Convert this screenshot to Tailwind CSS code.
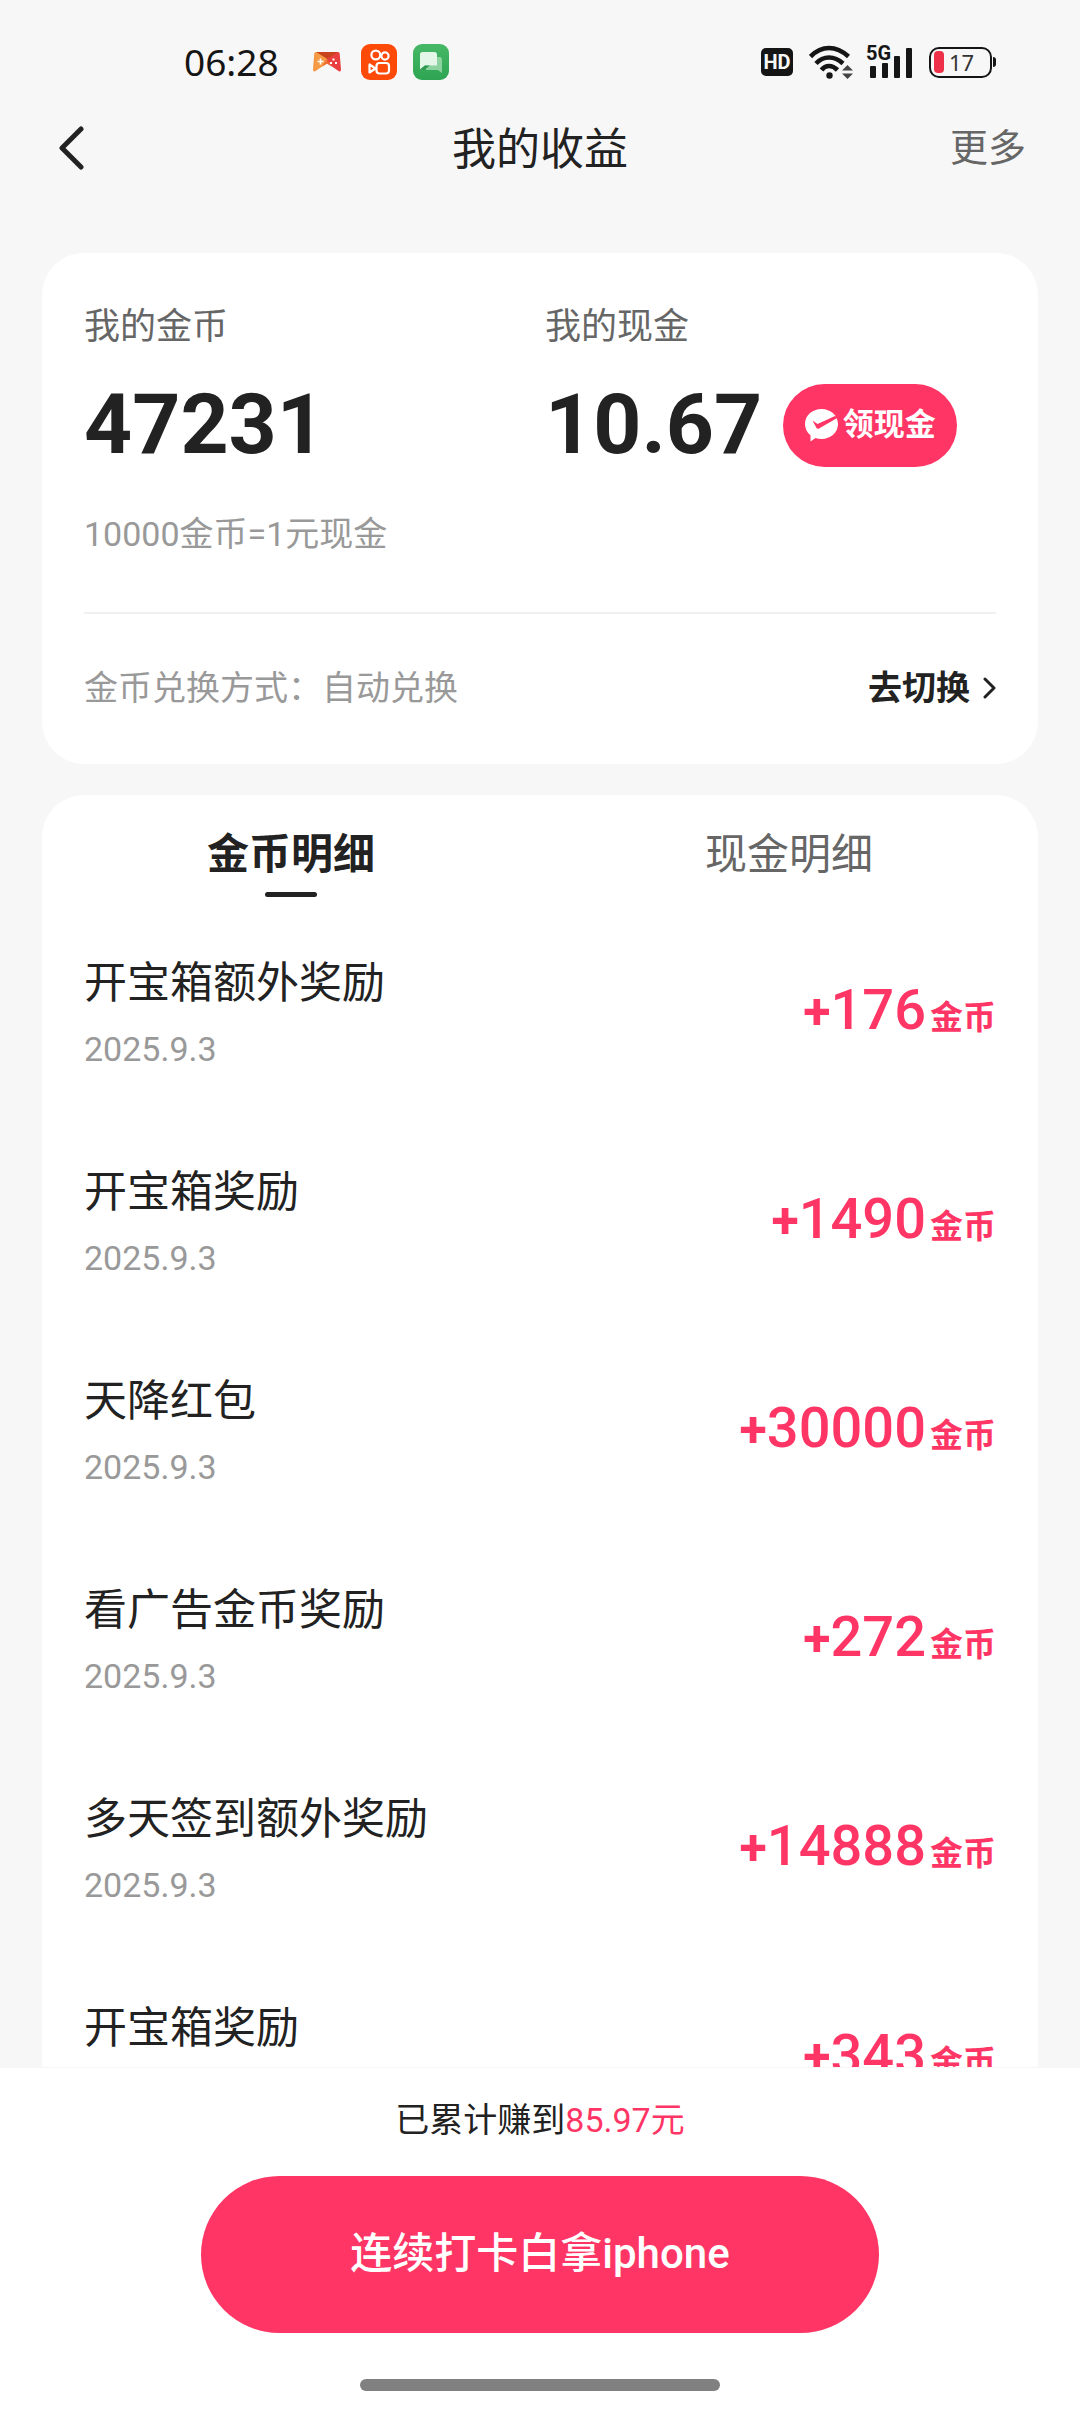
<!DOCTYPE html>
<html lang="zh-CN">
<head>
<meta charset="utf-8">
<meta name="viewport" content="width=device-width, initial-scale=1">
<title>我的收益</title>
<script src="https://cdn.jsdelivr.net/npm/@tailwindcss/browser@4"></script>
</head>
<body class="bg-[#f7f7f7] text-[#222222] font-[Roboto,'Noto_Sans_CJK_SC',sans-serif]">
<div class="flex h-screen flex-col">

  <!-- Status bar -->
  <div class="flex h-24 shrink-0 items-center justify-between pt-7 pr-[84px] pl-[184px] text-[#151515]">
    <div class="flex items-center">
      <span class="font-['Noto_Sans',sans-serif] text-[37px] leading-[48px]">06:28</span>
      <svg class="ml-[34px] h-5 w-7" viewBox="0 0 28 20" aria-hidden="true">
        <path d="M3 0Q1.600 0 1.300 1.600L0 17.500Q0 20 2.200 19.300L9 14.500Q14 11.500 14 11.500V0Z" fill="#f4943f"/>
        <path d="M25 0Q26.400 0 26.700 1.600L28 17.500Q28 20 25.800 19.300L19 14.500Q14 11.500 14 11.500V0Z" fill="#e9403f"/>
        <path d="M3 0h22L14 7Z" fill="#c8431c"/>
        <path d="M3 0 14 7v4.500L9 14.500 1 19Z" fill="#f59a45"/>
        <path d="M14 7 9 14.500 14 11.500 19 14.500Z" fill="#ef6a35"/>
        <path d="M7.500 6.500v6M4.500 9.500h6" stroke="#fff" stroke-width="1.600"/>
        <path d="M20.500 6.500v2M18 10v2M23 10v2" stroke="#fff" stroke-width="2"/>
      </svg>
      <svg class="ml-5 size-9" viewBox="0 0 36 36" aria-hidden="true">
        <rect width="36" height="36" rx="9" fill="#fe4a08"/>
        <g fill="none" stroke="#fff" stroke-width="2.200">
          <circle cx="14.800" cy="11" r="4.400"/><circle cx="24" cy="12" r="3.600"/>
          <rect x="15.500" y="19" width="12.500" height="10.500" rx="3"/>
          <path d="M8.500 20.500v8l6-4z" stroke-linejoin="round"/>
        </g>
      </svg>
      <svg class="ml-4 size-9" viewBox="0 0 36 36" aria-hidden="true">
        <defs><linearGradient id="chat" x1="0" y1="0" x2="0" y2="1"><stop stop-color="#47b866"/><stop offset="1" stop-color="#2da552"/></linearGradient></defs>
        <rect width="36" height="36" rx="9" fill="url(#chat)"/>
        <path d="M13 13h13.500q2.500 0 2.500 2.500V29l-4-3H13Z" fill="#8dd3a0"/>
        <path d="M9.500 8h12q2.500 0 2.500 2.500v11H12l-5 4V10.500Q7 8 9.500 8Z" fill="#e3f6e7"/>
        <path d="M7 25.500l5-4h5L11 26Z" fill="#2f9b50"/>
      </svg>
    </div>
    <div class="flex items-center">
      <span class="flex h-7 w-8 items-center justify-center rounded-[5px] bg-[#151515] text-[20px] leading-7 font-bold text-[#f7f7f7]">HD</span>
      <svg class="ml-4 h-[34px] w-[45px]" viewBox="0 0 45 34" aria-hidden="true">
        <g fill="none" stroke="#151515" stroke-width="4.600">
          <path d="M1.500 11.500Q10 3 20 3T39.500 11.500"/>
          <path d="M7 18.500Q12.500 12.500 20 12.500T34 18.500"/>
          <path d="M12.500 25Q15.500 21 20 21T28.500 25"/>
        </g>
        <circle cx="20.500" cy="30.500" r="3.200" fill="#151515"/>
        <path d="M33 25.500 38.500 20 44 25.500ZM33 28.500h11L38.500 34Z" fill="#444"/>
      </svg>
      <div class="relative ml-3 h-[34px] w-[47px]">
        <span class="absolute -top-px left-0 bg-[#f7f7f7] text-[20px] leading-[18px] font-bold">5G</span>
        <svg class="h-[34px] w-[47px]" viewBox="0 0 47 34" fill="#151515" aria-hidden="true">
          <rect x="4" y="21" width="6" height="12" rx="1"/><rect x="16" y="18" width="6" height="15" rx="1"/><rect x="28" y="11" width="6" height="22" rx="1"/><rect x="40" y="3" width="6" height="30" rx="1"/>
        </svg>
      </div>
      <div class="ml-4 flex items-center">
        <div class="flex h-[31px] w-[63px] items-center rounded-[10px] border-2 border-[#151515] pl-[3px]">
          <span class="h-[22px] w-[10px] rounded-[4px] bg-[#ee3148]"></span>
          <span class="ml-[5px] font-['Noto_Sans',sans-serif] text-[22px] leading-[26px] text-[#333333]">17</span>
        </div>
        <span class="ml-px h-[10px] w-[3px] rounded-r bg-[#151515]"></span>
      </div>
    </div>
  </div>

  <!-- Title bar -->
  <header class="grid h-[104px] shrink-0 grid-cols-3 items-center px-[54px]">
    <button type="button" aria-label="返回" class="justify-self-start pl-1">
      <svg class="h-[46px] w-[26px]" viewBox="0 0 26 46" fill="none" stroke="#222" stroke-width="5" stroke-linecap="round" stroke-linejoin="round" aria-hidden="true"><path d="M23 4 4 23 23 42"/></svg>
    </button>
    <h1 class="pt-1 text-center text-[44px] leading-[56px]">我的收益</h1>
    <a href="#" class="justify-self-end text-[38px] leading-[56px] text-[#666666]">更多</a>
  </header>

  <main class="flex min-h-0 flex-1 flex-col gap-[31px] px-[42px] pt-[53px]">
    <!-- Balance -->
    <section class="shrink-0 rounded-[42px] bg-white px-[42px] pt-[50px] pb-[2px]">
      <div class="grid grid-cols-2 gap-[10px]">
        <div>
          <h2 class="text-[36px] leading-[48px] text-[#666666]">我的金币</h2>
          <p class="mt-8 text-[84px] leading-[84px] font-bold">47231</p>
        </div>
        <div>
          <h2 class="text-[36px] leading-[48px] text-[#666666]">我的现金</h2>
          <div class="mt-8 flex items-center gap-[21px]">
            <p class="text-[84px] leading-[84px] font-bold">10.67</p>
            <button type="button" class="flex h-[83px] w-[174px] items-center justify-center gap-[5px] rounded-full bg-[#ff3665] text-[31px] leading-[40px] font-bold text-white">
              <svg class="size-[33px]" viewBox="0 0 33 33" aria-hidden="true">
                <path d="M16.500 0C25.600 0 33 6.500 33 15S25.600 30 16.500 30Q13 30 10.500 29L5.500 32.500V26.300Q0 22 0 15C0 6.500 7.400 0 16.500 0Z" fill="#fff"/>
                <path d="M7.500 11.500 12.500 15 30 7 33 8.500 14 19.500Q12.500 20.300 11.500 19Z" fill="#ff3665"/>
              </svg>
              领现金
            </button>
          </div>
        </div>
      </div>
      <p class="mt-[43px] text-[34px] leading-[48px] text-[#999999]">10000金币=1元现金</p>
      <div class="mt-[54px] flex h-[150px] items-center justify-between border-t-2 border-[#f0f0f0] text-[34px] leading-[48px]">
        <p class="text-[#999999]">金币兑换方式：自动兑换</p>
        <a href="#" class="flex items-center gap-3 font-bold">去切换
          <svg class="h-[22px] w-[14px]" viewBox="0 0 14 22" fill="none" stroke="#222" stroke-width="3" stroke-linecap="round" stroke-linejoin="round" aria-hidden="true"><path d="M3 2 12 11 3 20"/></svg>
        </a>
      </div>
    </section>

    <!-- Records -->
    <section class="flex min-h-0 flex-1 flex-col overflow-hidden rounded-t-[42px] bg-white">
      <div role="tablist" class="grid shrink-0 grid-cols-2 pt-[33px] pb-3 text-[42px] leading-[54px]">
        <button type="button" role="tab" aria-selected="true" class="flex flex-col items-center gap-[10px] font-bold">金币明细<span class="h-[5px] w-[52px] rounded-full bg-[#222222]"></span></button>
        <button type="button" role="tab" aria-selected="false" class="flex flex-col items-center text-[#666666]">现金明细</button>
      </div>
      <ul class="min-h-0 flex-1 overflow-y-auto px-[42px] [scrollbar-width:none]">
        <li class="flex h-[209px] items-center justify-between">
          <div><h3 class="text-[43px] leading-[56px]">开宝箱额外奖励</h3><p class="mt-[14px] text-[34px] leading-[48px] text-[#999999]">2025.9.3</p></div>
          <p class="text-[56px] leading-[64px] font-medium text-[#ff3665]"><span class="text-[50px] font-bold">+</span>176<span class="ml-1 text-[33px] font-bold">金币</span></p>
        </li>
        <li class="flex h-[209px] items-center justify-between">
          <div><h3 class="text-[43px] leading-[56px]">开宝箱奖励</h3><p class="mt-[14px] text-[34px] leading-[48px] text-[#999999]">2025.9.3</p></div>
          <p class="text-[56px] leading-[64px] font-medium text-[#ff3665]"><span class="text-[50px] font-bold">+</span>1490<span class="ml-1 text-[33px] font-bold">金币</span></p>
        </li>
        <li class="flex h-[209px] items-center justify-between">
          <div><h3 class="text-[43px] leading-[56px]">天降红包</h3><p class="mt-[14px] text-[34px] leading-[48px] text-[#999999]">2025.9.3</p></div>
          <p class="text-[56px] leading-[64px] font-medium text-[#ff3665]"><span class="text-[50px] font-bold">+</span>30000<span class="ml-1 text-[33px] font-bold">金币</span></p>
        </li>
        <li class="flex h-[209px] items-center justify-between">
          <div><h3 class="text-[43px] leading-[56px]">看广告金币奖励</h3><p class="mt-[14px] text-[34px] leading-[48px] text-[#999999]">2025.9.3</p></div>
          <p class="text-[56px] leading-[64px] font-medium text-[#ff3665]"><span class="text-[50px] font-bold">+</span>272<span class="ml-1 text-[33px] font-bold">金币</span></p>
        </li>
        <li class="flex h-[209px] items-center justify-between">
          <div><h3 class="text-[43px] leading-[56px]">多天签到额外奖励</h3><p class="mt-[14px] text-[34px] leading-[48px] text-[#999999]">2025.9.3</p></div>
          <p class="text-[56px] leading-[64px] font-medium text-[#ff3665]"><span class="text-[50px] font-bold">+</span>14888<span class="ml-1 text-[33px] font-bold">金币</span></p>
        </li>
        <li class="flex h-[209px] items-center justify-between">
          <div><h3 class="text-[43px] leading-[56px]">开宝箱奖励</h3><p class="mt-[14px] text-[34px] leading-[48px] text-[#999999]">2025.9.3</p></div>
          <p class="text-[56px] leading-[64px] font-medium text-[#ff3665]"><span class="text-[50px] font-bold">+</span>343<span class="ml-1 text-[33px] font-bold">金币</span></p>
        </li>
      </ul>
    </section>
  </main>

  <!-- Bottom action -->
  <footer class="flex shrink-0 flex-col items-center border-t border-[#f6f6f6] bg-white pt-7 pb-[21px]">
    <p class="text-[34px] leading-[48px]">已累计赚到<span class="text-[#ff3665]">85.97元</span></p>
    <button type="button" class="mt-8 h-[157px] w-[678px] rounded-full bg-[#ff3665] pb-[2px] text-[42px] leading-[56px] font-medium text-white">连续打卡白拿iphone</button>
    <span class="mt-[46px] h-3 w-[360px] rounded-full bg-[#808080]"></span>
  </footer>
</div>
</body>
</html>
